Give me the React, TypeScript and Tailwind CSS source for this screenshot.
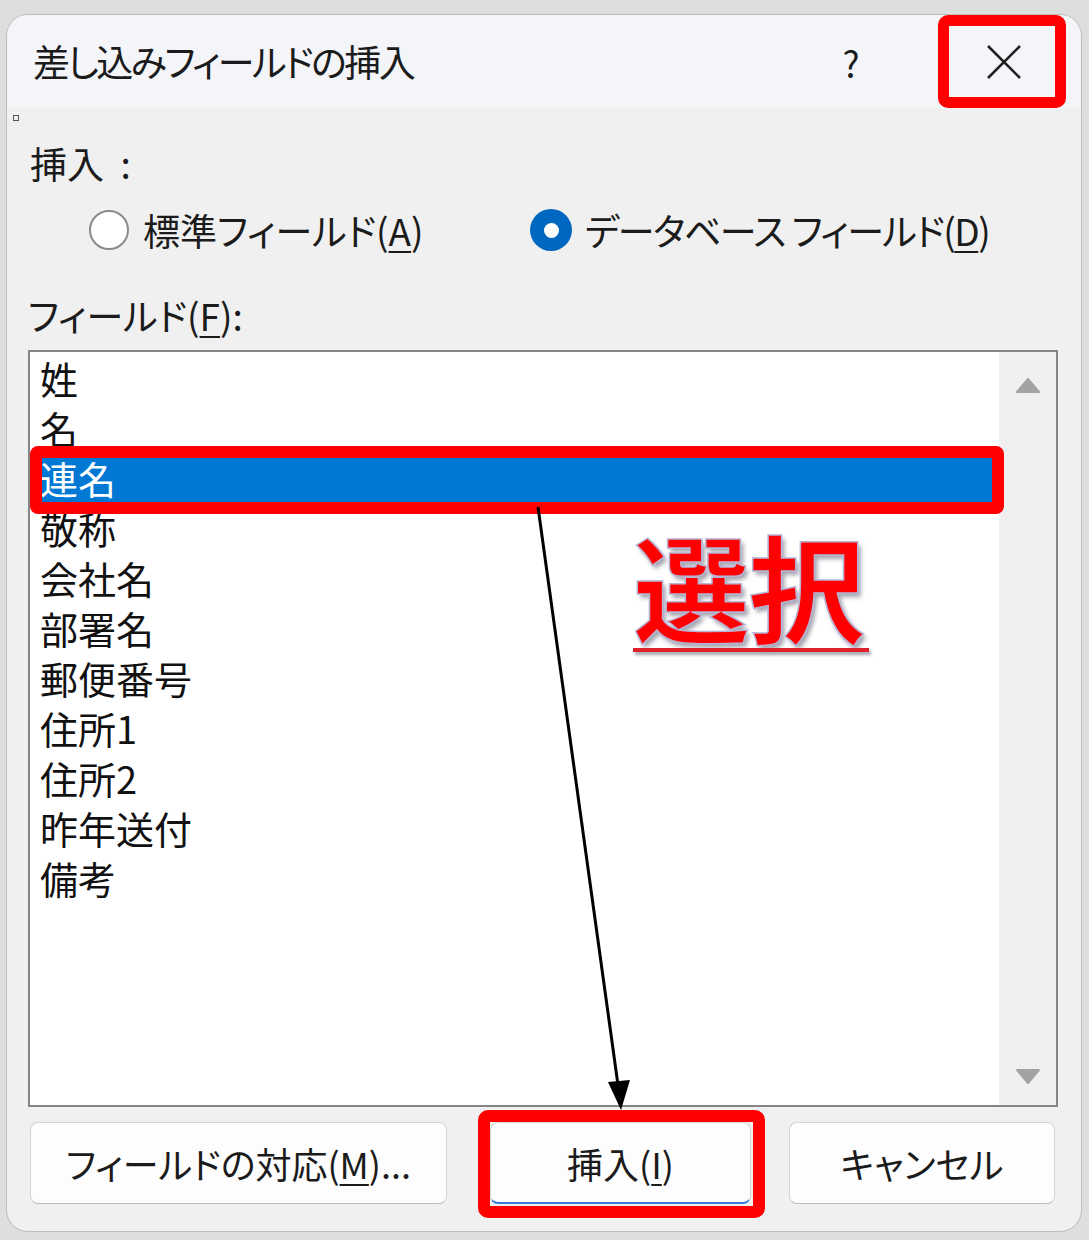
import React from "react";

const F = "font-['Noto_Sans_CJK_JP','Noto_Sans_CJK_SC',sans-serif] [font-feature-settings:'palt']";

const items = ["姓", "名", "連名", "敬称", "会社名", "部署名", "郵便番号", "住所1", "住所2", "昨年送付", "備考"];

export default function App() {
  return (
    <div className={`relative w-[1089px] h-[1240px] overflow-hidden bg-[#dedede] pt-[14px] pl-[6px] text-[#1b1b1b] ${F}`}>
      <div className="relative flex h-[1218px] w-[1076px] flex-col overflow-hidden rounded-[22px] border border-[#bcbcbc] bg-[#f0f0f0]">
        {/* title bar */}
        <div className="flex h-[93px] items-center bg-[#f3f5f9] pr-[28px]">
          <div className="pl-[26px] text-[37px] leading-none tracking-[-2.5px]">差し込みフィールドの挿入</div>
          <div className="ml-auto w-[40px] text-center text-[36px] leading-none">?</div>
          <div className="w-[84px]" />
          <div className="flex w-[98px] items-center justify-center">
            <svg width="36" height="36" viewBox="0 0 36 36">
              <path d="M2 2 L34 34 M34 2 L2 34" stroke="#202020" strokeWidth="2.6" />
            </svg>
          </div>
        </div>
        {/* body */}
        <div className="flex flex-col px-[21px]">
          <div className="mt-[32px] h-[46px] pl-[2px] text-[37px] leading-[46px]">挿入&nbsp;&nbsp;:</div>
          <div className="mt-[21px] flex h-[46px] items-center pl-[61px] text-[37px] leading-[46px]">
            <div className="flex w-[441px] items-center gap-[14px]">
              <div className="h-[40px] w-[40px] rounded-full border-[2px] border-[#8a8a8a] bg-white" />
              <span>
                標準フィールド(<span className="underline underline-offset-[5px] decoration-2">A</span>)
              </span>
            </div>
            <div className="flex items-center gap-[13px]">
              <div className="flex h-[42px] w-[42px] items-center justify-center rounded-full bg-[#0067c0]">
                <div className="h-[15px] w-[15px] rounded-full bg-white" />
              </div>
              <span className="tracking-[-1.5px]">
                データベース フィールド(<span className="underline underline-offset-[5px] decoration-2">D</span>)
              </span>
            </div>
          </div>
          <div className="mt-[39px] h-[46px] text-[37px] leading-[46px]">
            フィールド(<span className="underline underline-offset-[5px] decoration-2">F</span>):
          </div>
          {/* list box */}
          <div className="mt-[12px] flex h-[757px] w-[1030px] border-2 border-[#858585] bg-white">
            <div className="flex flex-1 flex-col pt-[1px]">
              {items.map((it) => (
                <div
                  key={it}
                  className={`h-[50px] pl-[10px] text-[38px] leading-[50px] ${it === "連名" ? "bg-[#0078d4] text-white" : "text-[#111]"}`}
                >
                  {it}
                </div>
              ))}
            </div>
            <div className="flex w-[57px] flex-col items-center justify-between bg-[#f0f0f0] pb-[21px] pt-[26px]">
              <svg width="24" height="15" viewBox="0 0 24 15">
                <path d="M12 1 L23 14 L1 14 Z" fill="#a3a3a3" stroke="#a3a3a3" strokeLinejoin="round" strokeWidth="2" />
              </svg>
              <svg width="24" height="15" viewBox="0 0 24 15">
                <path d="M1 1 L23 1 L12 14 Z" fill="#a3a3a3" stroke="#a3a3a3" strokeLinejoin="round" strokeWidth="2" />
              </svg>
            </div>
          </div>
          {/* buttons */}
          <div className="mt-[15px] flex h-[82px] pl-[2px] text-[36px]">
            <div className="flex w-[417px] items-center justify-center rounded-[8px] border border-[#d3d3d3] border-b-[#bdbdbd] bg-[#fdfdfd]">
              フィールドの対応(<span className="underline underline-offset-[5px] decoration-2">M</span>)...
            </div>
            <div className="ml-[43px] flex w-[261px] items-center justify-center rounded-[8px] border border-[#d3d3d3] border-b-2 border-b-[#3a7bd5] bg-[#fdfdfd]">
              挿入(<span className="underline underline-offset-[5px] decoration-2">I</span>)
            </div>
            <div className="ml-[38px] flex w-[266px] items-center justify-center rounded-[8px] border border-[#d3d3d3] border-b-[#bdbdbd] bg-[#fdfdfd]">
              キャンセル
            </div>
          </div>
        </div>
      </div>

      {/* tiny marker */}
      <div className="absolute left-[13px] top-[115px] h-[6px] w-[6px] border border-[#555]" />

      {/* annotations */}
      <div className="absolute left-[938px] top-[15px] h-[93px] w-[128px] rounded-[10px] border-[11px] border-[#ff0000]" />
      <div className="absolute left-[30px] top-[446px] h-[68px] w-[974px] rounded-[8px] border-[12px] border-[#ff0000]" />
      <div className="absolute left-[478px] top-[1110px] h-[108px] w-[287px] rounded-[10px] border-[12px] border-[#ff0000]" />

      <svg className="absolute left-0 top-0" width="1089" height="1240" viewBox="0 0 1089 1240">
        <line x1="538" y1="507" x2="618" y2="1085" stroke="#000" strokeWidth="3" />
        <path d="M621 1110 L608 1082 L630 1080 Z" fill="#000" />
      </svg>

      <div className="absolute left-[633px] top-[517px] flex flex-col items-start">
        <div className="text-[117px] font-bold leading-[134px] tracking-[-2px] text-[#ff0000] [-webkit-text-stroke:1.5px_#b9b3d6] [text-shadow:3px_4px_4px_rgba(90,90,110,0.55)]">
          選択
        </div>
        <div className="mt-[-3px] h-[4px] w-[236px] bg-[#e0202a] shadow-[2px_3px_3px_rgba(90,90,110,0.55)]" />
      </div>
    </div>
  );
}
